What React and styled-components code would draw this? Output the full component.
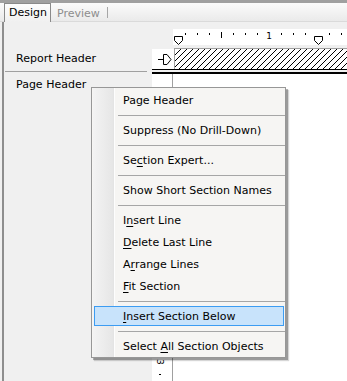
import React from 'react'
import styled, { createGlobalStyle } from 'styled-components'

const GlobalStyle = createGlobalStyle`
  html, body {
    margin: 0;
    padding: 0;
  }
  body {
    background: #f0f0f0;
    font-family: "DejaVu Sans", "Liberation Sans", sans-serif;
    font-size: 11px;
    color: #000;
  }
`

const Screen = styled.div`
  position: relative;
  width: 347px;
  height: 381px;
  overflow: hidden;
  display: flex;
  flex-direction: column;
  background: #f0f0f0;
`

const TabStrip = styled.div`
  box-sizing: border-box;
  height: 23px;
  display: flex;
  align-items: flex-end;
  border-top: 3px solid #a0a0a0;
  padding-left: 4px;
  background: linear-gradient(#fbfbfb, #e9e9e9);
  box-shadow: inset 0 -1px #dadada;
`

const Tab = styled.div`
  box-sizing: border-box;
  height: ${p => (p.$active ? '19px' : '18px')};
  display: flex;
  align-items: center;
  padding: ${p => (p.$active ? '0 3px 1px 4px' : '0 6px 0 6px')};
  color: ${p => (p.$active ? '#000' : '#8d8d8d')};
  background: ${p => (p.$active ? 'linear-gradient(#fdfdfd, #f0f0f0)' : 'transparent')};
  border: ${p => (p.$active ? '1px solid #8a8a8a' : 'none')};
  border-bottom: none;
  border-right: ${p => (p.$active ? '1px solid #8a8a8a' : '1px solid transparent')};
`

const TabDivider = styled.div`
  width: 1px;
  height: 11px;
  margin-bottom: 4px;
  background: #a6a6a6;
`

const Body = styled.div`
  flex: 1;
  display: flex;
  flex-direction: column;
  margin-left: 2px;
  border-left: 2px solid #8e8e8e;
`

const SectionRow = styled.div`
  display: flex;
  height: ${p => p.$h}px;
  flex: ${p => (p.$grow ? 1 : 'none')};
`

const LabelCell = styled.div`
  box-sizing: border-box;
  width: 143px;
  flex: none;
  display: flex;
  align-items: ${p => (p.$top ? 'flex-start' : 'center')};
  padding: ${p => (p.$top ? '4px 0 0 12px' : '0 0 0 12px')};
  line-height: 13px;
`

const RuleCell = styled.div`
  width: 143px;
  flex: none;
`

const LabelRule = styled.div`
  width: 142px;
  height: 1px;
  margin: 2px 0 0 1px;
  background: #a0a0a0;
`

const Gutter = styled.div`
  width: 5px;
  flex: none;
`

const DesignCell = styled.div`
  flex: 1;
  display: flex;
`

const RulerCorner = styled.div`
  width: 21px;
  flex: none;
`

const HRuler = styled.div`
  flex: 1;
  height: 16px;
  margin-top: 7px;
  background: #fff;
`

const MarkerBox = styled.div`
  width: 20px;
  flex: none;
  margin-top: 1px;
  background: #fff;
  display: flex;
  align-items: center;
  justify-content: flex-end;
  padding-right: 2px;
`

const HatchBox = styled.div`
  flex: 1;
  border-top: 1px solid #a0a0a0;
  border-left: 1px solid #a0a0a0;
  background: #fff;
  overflow: hidden;
`

const DoubleRule = styled.div`
  flex: 1;
  height: 2px;
  border-top: 1px solid #000;
  border-bottom: 2px solid #000;
`

const VRuler = styled.div`
  width: 20px;
  flex: none;
  background: #fff;
`

const Canvas = styled.div`
  flex: 1;
  background: #fff;
  border-left: 1px solid #a0a0a0;
`

const Menu = styled.div`
  position: absolute;
  left: 91px;
  top: 87px;
  width: 195px;
  box-sizing: border-box;
  display: flex;
  flex-direction: column;
  padding: 1px 1px 0 2px;
  border: 1px solid #979797;
  background:
    linear-gradient(to right, transparent 1px, #f3f3f3 1px, #e6e6e6 21px, #e2e2e2 22px, #fdfdfd 22px, #fdfdfd 23px, transparent 23px),
    #f6f5f3;
  box-shadow: 2px 2px 0 rgba(0, 0, 0, 0.28), 3px 3px 1px rgba(0, 0, 0, 0.16);
`

const Item = styled.div`
  box-sizing: border-box;
  height: 20px;
  margin: 1px 0;
  padding-left: 28px;
  line-height: 20px;
  white-space: pre;
  border: 1px solid ${p => (p.$hot ? '#3c9cf2' : 'transparent')};
  background: ${p => (p.$hot ? '#c8e3fb' : 'transparent')};
`

const Key = styled.span`
  text-decoration: underline;
  text-underline-offset: 2px;
`

const Separator = styled.div`
  height: 1px;
  margin: 4px -1px 3px 24px;
  background: #a6a6a6;
`

function RulerMarks() {
  const ticks = [12, 24, 36, 60, 72, 84, 108, 120, 132, 156, 168]
  return (
    <svg width="174" height="16" shapeRendering="crispEdges">
      {ticks.map(x => (
        <rect key={x} x={x} y={4} width={1} height={2} fill="#000" />
      ))}
      <rect x={48} y={3} width={1} height={6} fill="#000" />
      <text x={96} y={10} fontSize="9" textAnchor="middle" fontFamily="DejaVu Sans, sans-serif">1</text>
      {[1, 141].map(x => (
        <path
          key={x}
          d={`M${x + 0.5} 7.5 H${x + 8.5} V11.5 L${x + 4.5} 15.5 L${x + 0.5} 11.5 Z`}
          fill="#fff"
          stroke="#000"
          strokeWidth="1"
          shapeRendering="auto"
        />
      ))}
    </svg>
  )
}

function SectionMarker() {
  return (
    <svg width="14" height="11">
      <path d="M0 5.5 H5" stroke="#000" strokeWidth="1" />
      <path d="M5.5 0.5 H9 L13 5.5 L9 10.5 H5.5 Z" fill="#fff" stroke="#000" strokeWidth="1" />
    </svg>
  )
}

function Hatch() {
  return (
    <svg width="100%" height="100%" shapeRendering="crispEdges">
      <defs>
        <pattern id="hatch" width="6" height="6" patternUnits="userSpaceOnUse">
          <path d="M-1 7 L7 -1" stroke="#000" strokeWidth="1" />
        </pattern>
      </defs>
      <rect width="100%" height="100%" fill="url(#hatch)" />
    </svg>
  )
}

function VRulerMarks() {
  return (
    <svg width="20" height="306">
      <text x={0} y={0} fontSize="9" fontFamily="DejaVu Sans, sans-serif" transform="translate(5 285) rotate(90)">3</text>
      <rect x={7} y={300} width={2} height={1} fill="#000" />
    </svg>
  )
}

export default function App() {
  return (
    <Screen>
      <GlobalStyle />
      <TabStrip>
        <Tab $active>Design</Tab>
        <Tab>Preview</Tab>
        <TabDivider />
      </TabStrip>
      <Body>
        <SectionRow $h={26}>
          <LabelCell />
          <Gutter />
          <DesignCell>
            <RulerCorner />
            <HRuler>
              <RulerMarks />
            </HRuler>
          </DesignCell>
        </SectionRow>
        <SectionRow $h={21}>
          <LabelCell>Report Header</LabelCell>
          <Gutter />
          <DesignCell>
            <MarkerBox>
              <SectionMarker />
            </MarkerBox>
            <HatchBox>
              <Hatch />
            </HatchBox>
          </DesignCell>
        </SectionRow>
        <SectionRow $h={5}>
          <RuleCell>
            <LabelRule />
          </RuleCell>
          <Gutter />
          <DoubleRule />
        </SectionRow>
        <SectionRow $grow>
          <LabelCell $top>Page Header</LabelCell>
          <Gutter />
          <DesignCell>
            <VRuler>
              <VRulerMarks />
            </VRuler>
            <Canvas />
          </DesignCell>
        </SectionRow>
      </Body>
      <Menu>
        <Item>Page Header</Item>
        <Separator />
        <Item>Suppress (No Drill-Down)</Item>
        <Separator />
        <Item>Se<Key>c</Key>tion Expert...</Item>
        <Separator />
        <Item>Show Short Section Names</Item>
        <Separator />
        <Item>I<Key>n</Key>sert Line</Item>
        <Item><Key>D</Key>elete Last Line</Item>
        <Item>A<Key>r</Key>range Lines</Item>
        <Item><Key>F</Key>it Section</Item>
        <Separator />
        <Item $hot><Key>I</Key>nsert Section Below</Item>
        <Separator />
        <Item>{'Select '}<Key>A</Key>ll Section Objects</Item>
      </Menu>
    </Screen>
  )
}
